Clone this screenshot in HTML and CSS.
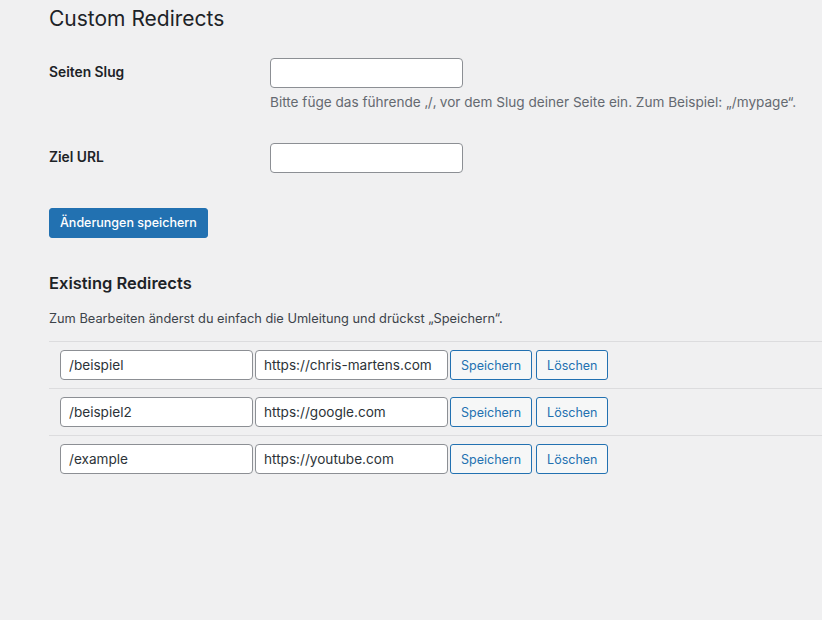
FILE: index.html
```html
<!DOCTYPE html>
<html lang="de">
<head>
<meta charset="utf-8">
<title>Custom Redirects</title>
<link rel="stylesheet" href="styles.css">
</head>
<body>
<div class="wrap">
  <h1 class="page-title">Custom Redirects</h1>
  <form class="settings">
    <div class="field-row">
      <label class="field-label" for="slug">Seiten Slug</label>
      <div class="field-value">
        <input class="text-input" id="slug" type="text">
        <p class="description">Bitte füge das führende ‚/‚ vor dem Slug deiner Seite ein. Zum Beispiel: „/mypage“.</p>
      </div>
    </div>
    <div class="field-row field-row-second">
      <label class="field-label" for="target">Ziel URL</label>
      <div class="field-value">
        <input class="text-input" id="target" type="text">
      </div>
    </div>
    <button class="button-primary" type="button">Änderungen speichern</button>
  </form>

  <h2 class="section-title">Existing Redirects</h2>
  <p class="section-intro">Zum Bearbeiten änderst du einfach die Umleitung und drückst „Speichern“.</p>

  <div class="redirects">
    <div class="redirect-row">
      <input class="row-input" type="text" value="/beispiel">
      <input class="row-input" type="text" value="https://chris-martens.com">
      <button class="button-secondary" type="button">Speichern</button>
      <button class="button-secondary" type="button">Löschen</button>
    </div>
    <div class="redirect-row">
      <input class="row-input" type="text" value="/beispiel2">
      <input class="row-input" type="text" value="https://google.com">
      <button class="button-secondary" type="button">Speichern</button>
      <button class="button-secondary" type="button">Löschen</button>
    </div>
    <div class="redirect-row">
      <input class="row-input" type="text" value="/example">
      <input class="row-input" type="text" value="https://youtube.com">
      <button class="button-secondary" type="button">Speichern</button>
      <button class="button-secondary" type="button">Löschen</button>
    </div>
  </div>
</div>
</body>
</html>
```

FILE: styles.css
```css
html, body {
  margin: 0;
  padding: 0;
  background: #f0f0f1;
}

body {
  font-family: Inter, "Liberation Sans", Arial, sans-serif;
  color: #1d2327;
  font-size: 13px;
}

.wrap {
  padding-left: 49px;
}

.page-title {
  margin: 0;
  padding-top: 4px;
  font-size: 21px;
  font-weight: 400;
  line-height: 30px;
  color: #1d2327;
}

.settings {
  margin: 0;
}

.field-row {
  display: grid;
  grid-template-columns: 221px auto;
  align-items: start;
  margin-top: 24px;
}

.field-row-second {
  margin-top: 31px;
}

.field-label {
  font-size: 13.8px;
  font-weight: 600;
  line-height: 18px;
  margin-top: 5px;
  color: #1d2327;
}

.field-value {
  display: flex;
  flex-direction: column;
  align-items: flex-start;
}

.text-input {
  box-sizing: border-box;
  width: 193px;
  height: 30px;
  margin: 0;
  padding: 0 8px;
  border: 1px solid #8c8f94;
  border-radius: 4px;
  background: #fff;
  font: inherit;
  font-size: 14px;
}

.description {
  margin: 5px 0 0;
  font-size: 13.6px;
  line-height: 19px;
  color: #646970;
}

.button-primary {
  display: block;
  box-sizing: border-box;
  height: 30px;
  margin-top: 35px;
  padding: 0 10px;
  border: 1px solid #2271b1;
  border-radius: 3px;
  background: #2271b1;
  color: #fff;
  font: inherit;
  font-size: 12.5px;
  font-weight: 500;
  line-height: 28px;
}

.section-title {
  margin: 33px 0 0;
  font-size: 16.5px;
  font-weight: 600;
  line-height: 24px;
  color: #1d2327;
}

.section-intro {
  margin: 14px 0 0;
  font-size: 12.8px;
  line-height: 19px;
  color: #3c434a;
}

.redirects {
  margin-top: 13px;
}

.redirect-row {
  display: flex;
  align-items: center;
  gap: 2px;
  padding: 8px 11px;
  border-top: 1px solid #dcdcde;
}

.row-input {
  box-sizing: border-box;
  width: 193px;
  height: 30px;
  margin: 0;
  padding: 0 8px;
  border: 1px solid #8c8f94;
  border-radius: 4px;
  background: #fff;
  color: #2c3338;
  font: inherit;
  font-size: 13.6px;
}

.button-secondary {
  box-sizing: border-box;
  height: 30px;
  margin: 0;
  padding: 1px 10px 0;
  border: 1px solid #2271b1;
  border-radius: 3px;
  background: #f6f7f7;
  color: #2271b1;
  font: inherit;
  font-size: 12.5px;
  line-height: 27px;
}

.button-secondary + .button-secondary {
  margin-left: 2px;
}
```
